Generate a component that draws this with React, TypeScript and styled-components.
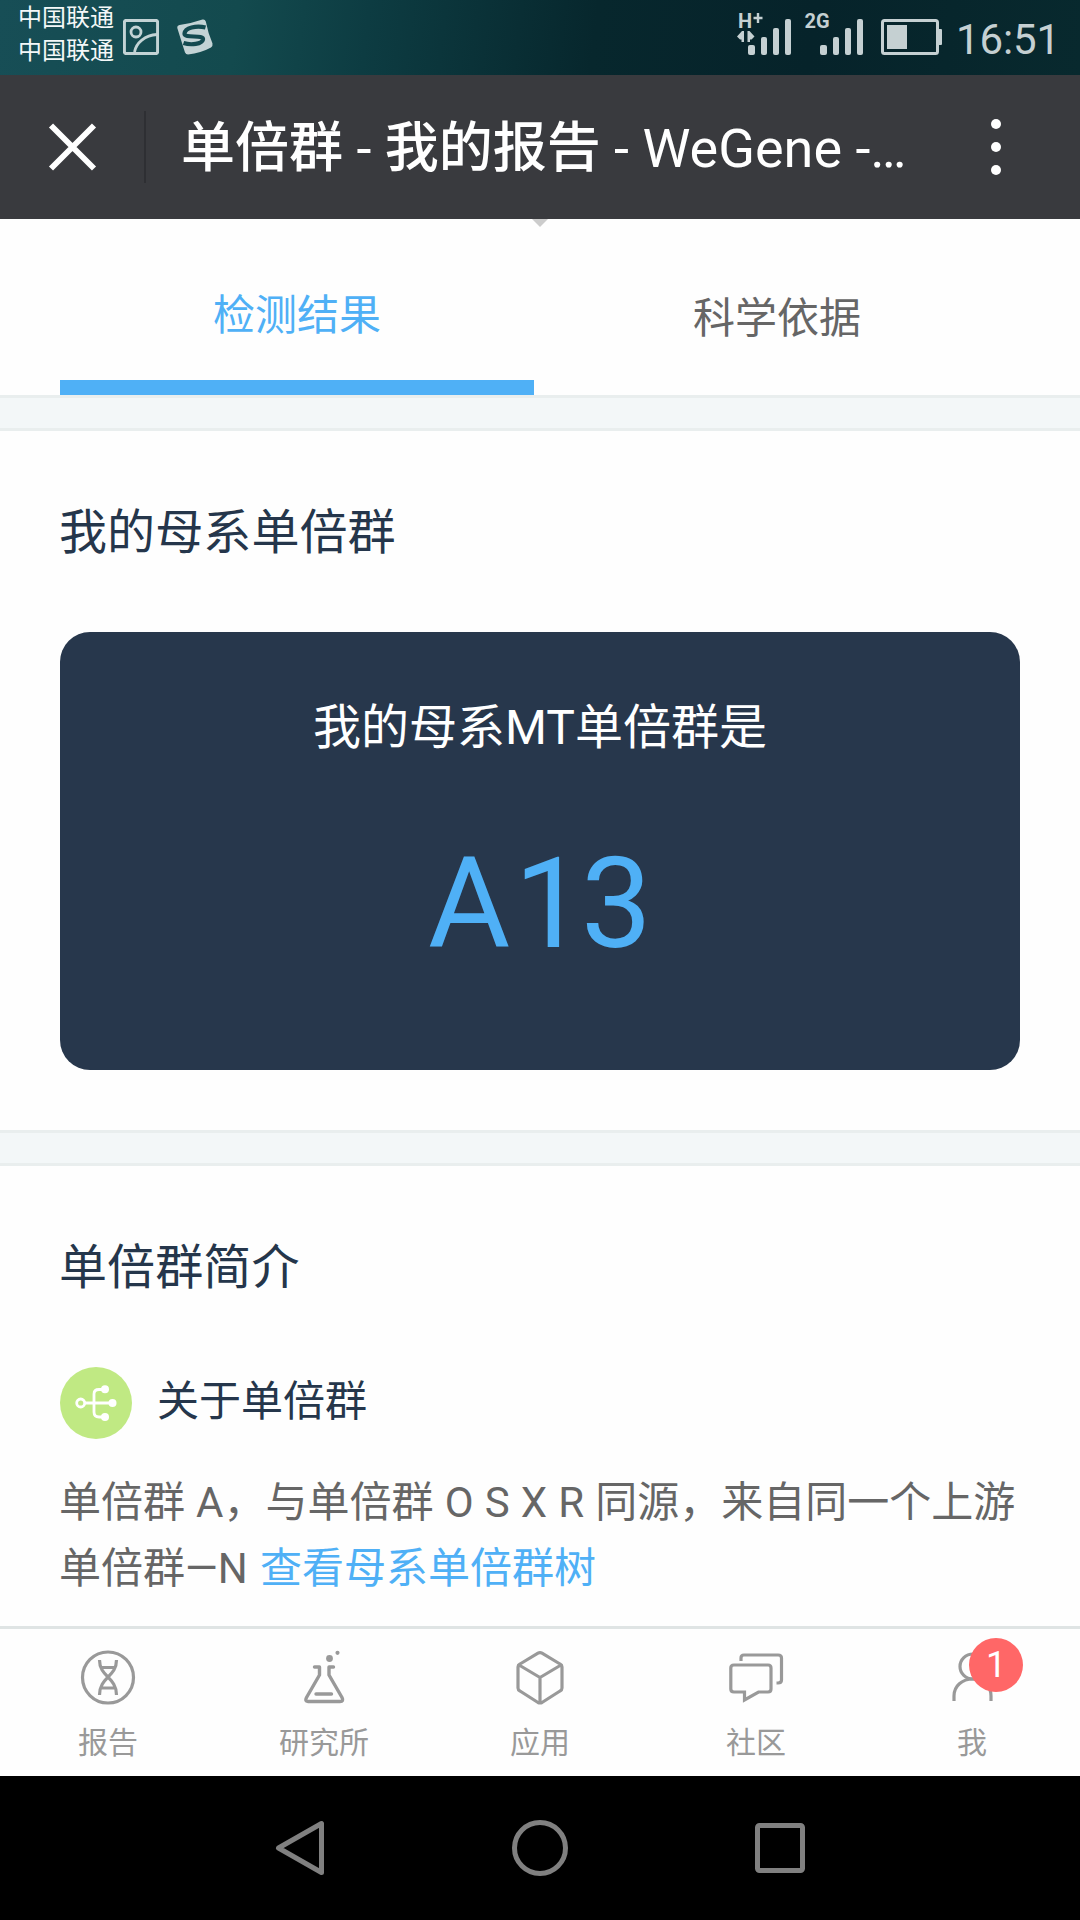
import React from 'react';
import styled, { createGlobalStyle } from 'styled-components';

const GlobalStyle = createGlobalStyle`
  *, *::before, *::after { box-sizing: border-box; }
  body {
    margin: 0;
    background: #fff;
    font-family: Roboto, "Noto Sans CJK SC", sans-serif;
  }
  svg { display: block; flex: none; }
  h1, h2, h3, p { margin: 0; font-weight: 400; }
  button { font: inherit; border: 0; background: none; padding: 0; color: inherit; }
`;

const Screen = styled.div`
  width: 1080px;
  height: 1920px;
  display: flex;
  flex-direction: column;
  overflow: hidden;
  background: #fefefe;
`;

const StatusBar = styled.header`
  height: 75px;
  flex: none;
  display: flex;
  align-items: flex-start;
  padding: 0 23px 0 18px;
  background: linear-gradient(97deg, #174e56 0%, #134a4e 22%, #0d3c42 34%, #07272d 55%, #06232a 75%, #08292e 100%);
  color: #c5d0d2;
`;

const Carriers = styled.div`
  width: 105px;
  padding-top: 2px;
  color: #f4f8f8;
  font-size: 24px;
  line-height: 33px;
  white-space: nowrap;
`;

const StatusIcons = styled.div`
  display: flex;
  gap: 18px;
  padding-top: 19px;
  flex: 1;
`;

const Clock = styled.time`
  font-size: 42px;
  line-height: 49px;
  margin: 15px 0 0 14px;
  width: 101px;
  letter-spacing: -0.1px;
  white-space: nowrap;
`;

const TitleBar = styled.nav`
  height: 144px;
  flex: none;
  display: flex;
  align-items: center;
  padding: 0 73px 0 48px;
  background: #393a3e;
  color: #fff;
`;

const TitleDivider = styled.span`
  width: 2px;
  height: 72px;
  margin: 0 35px 0 47px;
  background: #2e2f33;
`;

const PageTitle = styled.h1`
  flex: 1;
  padding-top: 4px;
  font-size: 54px;
  line-height: 72px;
  white-space: nowrap;
`;

const Hanzi = styled.span`
  font-weight: 500;
`;

const Tabs = styled.div`
  height: 176px;
  flex: none;
  display: flex;
  padding: 0 60px;
  position: relative;
`;

const PullArrow = styled.svg`
  position: absolute;
  left: 532px;
  top: 0;
`;

const Tab = styled.button<{ $active?: boolean }>`
  flex: ${p => (p.$active ? '0 0 474px' : '1')};
  display: flex;
  justify-content: center;
  align-items: flex-start;
  padding-top: ${p => (p.$active ? 67 : 70)}px;
  font-size: 42px;
  line-height: 60px;
  color: ${p => (p.$active ? '#4fb0f6' : '#666')};
  border-bottom: 15px solid ${p => (p.$active ? '#4fb0f6' : 'transparent')};
`;

const Band = styled.div`
  height: 36px;
  flex: none;
  background: #f3f7f8;
  border: solid #e9eeee;
  border-width: 3px 0;
`;

const Section = styled.section<{ $height: number }>`
  height: ${p => p.$height}px;
  flex: none;
  display: flex;
  flex-direction: column;
  padding: 66px 60px 0;
`;

const SectionTitle = styled.h2`
  color: #25364b;
  font-size: 48px;
  line-height: 72px;
  margin-left: -1px;
  letter-spacing: 0.1px;
`;

const ResultCard = styled.div`
  height: 438px;
  margin-top: 63px;
  border-radius: 30px;
  background: #27374c;
  display: flex;
  flex-direction: column;
  align-items: center;
  padding-top: 60px;
`;

const ResultLabel = styled.p`
  color: #fff;
  font-size: 48px;
  line-height: 72px;
`;

const ResultValue = styled.strong`
  color: #4fb0f6;
  font-size: 126px;
  line-height: 148px;
  font-weight: 400;
  margin-top: 66px;
`;

const Kern = styled.span<{ $by: number }>`
  letter-spacing: ${p => p.$by}px;
`;

const Topic = styled.div`
  display: flex;
  align-items: center;
  gap: 25px;
  height: 72px;
  margin-top: 63px;
`;

const TopicTitle = styled.h3`
  color: #25364b;
  font-size: 42px;
  line-height: 60px;
  padding-bottom: 2px;
`;

const Description = styled.p`
  margin: 31px 0 0 -1px;
  font-size: 42px;
  line-height: 66px;
  word-spacing: 0.7px;
  color: #666;
  white-space: nowrap;
`;

const TreeLink = styled.a`
  color: #4fb0f6;
  margin-left: 1px;
`;

const BottomNav = styled.nav`
  height: 150px;
  flex: none;
  display: flex;
  border-top: 3px solid #dfe4e4;
`;

const NavItem = styled.div`
  flex: 1;
  display: flex;
  flex-direction: column;
  align-items: center;
  padding-top: 19px;
  color: #999;
`;

const NavIcon = styled.div`
  position: relative;
  width: 60px;
  height: 60px;
`;

const NavLabel = styled.span`
  margin-top: 13px;
  font-size: 30px;
  line-height: 44px;
`;

const Badge = styled.span`
  position: absolute;
  left: 27px;
  top: -10px;
  width: 54px;
  height: 54px;
  border-radius: 50%;
  background: #ff6767;
  color: #fff;
  font-size: 36px;
  line-height: 55px;
  text-align: center;
`;

const SystemKeys = styled.footer`
  height: 144px;
  flex: none;
  display: flex;
  align-items: center;
  justify-content: center;
  gap: 180px;
  background: #000;
`;

const PictureIcon = () => (
  <svg width="36" height="36" viewBox="0 0 36 36" fill="none" stroke="#c3d3d5" strokeWidth="2.8">
    <rect x="1.4" y="1.4" width="33.2" height="33.2" rx="2" strokeWidth="3" />
    <circle cx="13" cy="13" r="5" />
    <path d="M11.500 33C13 24 22 16 34 15.500" />
  </svg>
);

const SogouIcon = () => (
  <svg width="36" height="36" viewBox="0 0 36 36">
    <path d="M2.500 6Q14 4.500 25.500 0.500Q28 0 28.800 2.500Q31 14 35.500 24.500Q36 27 34 28.500Q24 34 11 35.500Q9 35.500 8 33.500Q4 21 0.300 9Q0 6.500 2.500 6Z" fill="#c3d3d5" />
    <path d="M28.500 8.500C19 6 8 9 7.500 14.500C7 20 27 15 26 20.500C25 25 14 26.500 6.500 24" fill="none" stroke="#134a50" strokeWidth="4.200" />
  </svg>
);

const SignalIcon = ({ data }: { data?: boolean }) => (
  <svg width="60" height="46" viewBox="0 0 60 46" fill="#c5d0d2" fontFamily="Roboto" fontWeight="700">
    {data ? (
      <>
        <text x="6" y="18" fontSize="20">H</text>
        <path d="M24.800 3H27.200V6.800H30.500V9.200H27.200V13H24.800V9.200H21.500V6.800H24.800Z" />
        <path d="M5 26.500L10 21H12V32H9.500V29.500H8Z" />
        <path d="M22.500 26.500L17.500 21H15.500V32H18V29.500H19.500Z" />
      </>
    ) : (
      <text x="0.5" y="18" fontSize="20">2G</text>
    )}
    <rect x="16" y="35" width="7" height="10" rx="2" />
    <rect x="29" y="27" width="6" height="18" rx="2" />
    <rect x="41" y="18" width="6" height="27" rx="2" />
    <rect x="53" y="9" width="6" height="36" rx="2" />
  </svg>
);

const SignalGroup = styled.div`
  display: flex;
  gap: 12px;
  padding-top: 10px;
`;

const BatteryIcon = styled.svg`
  margin: 19px 0 0 17px;
`;

const iconProps = {
  width: 60,
  height: 60,
  viewBox: '0 0 60 60',
  fill: 'none',
  stroke: '#999',
  strokeWidth: 3.2,
  strokeLinejoin: 'round' as const,
};

const ReportIcon = () => (
  <svg {...iconProps}>
    <circle cx="30" cy="29.500" r="25.500" />
    <path d="M21.500 12C21.500 29 38.500 29 38.500 47M38.500 12C38.500 29 21.500 29 21.500 47M23.500 19.500H36.500M23.500 40H36.500" />
  </svg>
);

const LabIcon = () => (
  <svg {...iconProps} strokeWidth={3.4} strokeLinecap="round">
    <g transform="translate(1 0)">
      <path d="M19.500 19H24.500V27L11.500 49.500Q9.500 53.500 13 53.500H45Q49 53.500 47 49.500L34 27V19H38.500M21 46H36.500" />
      <circle cx="34.500" cy="10.500" r="3.400" fill="#999" stroke="none" />
      <circle cx="42.500" cy="4.800" r="2.100" fill="#999" stroke="none" />
    </g>
  </svg>
);

const AppsIcon = () => (
  <svg {...iconProps}>
    <path d="M28 5.200Q30 4 32 5.200L50 16Q52 17 52 19V40Q52 42 50 43L32 54.500Q30 55.500 28 54.500L10 43Q8 42 8 40V19Q8 17 10 16ZM9 17L30 29.500L51 17M30 29.500V55" />
  </svg>
);

const CommunityIcon = () => (
  <svg {...iconProps} strokeLinejoin="miter">
    <path d="M15 13V10Q15 7 18 7H52Q55.500 7 55.500 10V32Q55.500 35 52 35H50.500" />
    <path d="M8 17H42Q45 17 45 20V41Q45 44 42 44H32.500L18.500 52V44H8Q4.800 44 4.800 41V20Q4.800 17 8 17Z" />
  </svg>
);

const MeIcon = () => (
  <svg {...iconProps}>
    <ellipse cx="31" cy="18.500" rx="13" ry="12.500" />
    <path d="M12 53V48C12 38 20 31 31 31S49 38 49 48V53" />
  </svg>
);

const HaplogroupIcon = () => (
  <svg width="72" height="72" viewBox="0 0 72 72" fill="none" stroke="#fff" strokeWidth="2.800">
    <circle cx="36" cy="36" r="36" fill="#c0e983" stroke="none" />
    <circle cx="20.700" cy="36" r="4" />
    <path d="M25 36H52M44 22.500H39Q34 22.500 34 27V45Q34 50 39 50H44" />
    <g fill="#fff" stroke="none">
      <circle cx="45" cy="22.200" r="4" />
      <circle cx="52.500" cy="36" r="4" />
      <circle cx="45" cy="50" r="4" />
    </g>
  </svg>
);

const navItems = [
  { label: '报告', icon: <ReportIcon /> },
  { label: '研究所', icon: <LabIcon /> },
  { label: '应用', icon: <AppsIcon /> },
  { label: '社区', icon: <CommunityIcon /> },
  { label: '我', icon: <MeIcon />, badge: 1 },
];

export default function App() {
  return (
    <Screen>
      <GlobalStyle />
      <StatusBar>
        <Carriers>
          <div>中国联通</div>
          <div>中国联通</div>
        </Carriers>
        <StatusIcons>
          <PictureIcon />
          <SogouIcon />
        </StatusIcons>
        <SignalGroup>
          <SignalIcon data />
          <SignalIcon />
        </SignalGroup>
        <BatteryIcon width="61" height="36" viewBox="0 0 61 36">
          <rect x="1.500" y="1.500" width="55" height="33" rx="2" fill="none" stroke="#c5d0d2" strokeWidth="3" />
          <rect x="6" y="6" width="20" height="24" fill="#c5d0d2" />
          <rect x="57" y="10" width="4" height="16" rx="1" fill="#c5d0d2" />
        </BatteryIcon>
        <Clock>16:51</Clock>
      </StatusBar>

      <TitleBar>
        <svg width="49" height="48" viewBox="0 0 49 48" stroke="#fff" strokeWidth="5.800">
          <path d="M3 2.500L46 45.500M46 2.500L3 45.500" />
        </svg>
        <TitleDivider />
        <PageTitle>
          <Hanzi>单倍群</Hanzi> - <Hanzi>我的报告</Hanzi> - WeGene -…
        </PageTitle>
        <svg width="22" height="56" viewBox="0 0 22 56" fill="#fff">
          <circle cx="11" cy="5" r="5" />
          <circle cx="11" cy="28" r="5" />
          <circle cx="11" cy="51" r="5" />
        </svg>
      </TitleBar>

      <Tabs>
        <PullArrow width="16" height="8" viewBox="0 0 16 8">
          <path d="M0 0H16L8 8Z" fill="#ccc" />
        </PullArrow>
        <Tab $active>检测结果</Tab>
        <Tab>科学依据</Tab>
      </Tabs>
      <Band />

      <Section $height={699}>
        <SectionTitle>我的母系单倍群</SectionTitle>
        <ResultCard>
          <ResultLabel>我的母系MT单倍群是</ResultLabel>
          <ResultValue>
            <Kern $by={4}>A</Kern>
            <Kern $by={-4}>1</Kern>3
          </ResultValue>
        </ResultCard>
      </Section>
      <Band />

      <Section $height={460}>
        <SectionTitle>单倍群简介</SectionTitle>
        <Topic>
          <HaplogroupIcon />
          <TopicTitle>关于单倍群</TopicTitle>
        </Topic>
        <Description>
          单倍群 A，与单倍群 O S X R 同源，来自同一个上游
          <br />
          单倍群—N <TreeLink>查看母系单倍群树</TreeLink>
        </Description>
      </Section>

      <BottomNav>
        {navItems.map(item => (
          <NavItem key={item.label}>
            <NavIcon>
              {item.icon}
              {item.badge && <Badge>{item.badge}</Badge>}
            </NavIcon>
            <NavLabel>{item.label}</NavLabel>
          </NavItem>
        ))}
      </BottomNav>

      <SystemKeys>
        <svg width="60" height="60" viewBox="0 0 60 60" fill="none" stroke="#808080" strokeWidth="5" strokeLinejoin="round">
          <path d="M8.500 30L51.500 5.500V54.500Z" />
        </svg>
        <svg width="60" height="60" viewBox="0 0 60 60" fill="none" stroke="#808080" strokeWidth="5">
          <circle cx="30" cy="30" r="25.500" />
        </svg>
        <svg width="60" height="60" viewBox="0 0 60 60" fill="none" stroke="#808080" strokeWidth="5">
          <rect x="7.500" y="7.500" width="45" height="45" rx="2" />
        </svg>
      </SystemKeys>
    </Screen>
  );
}
